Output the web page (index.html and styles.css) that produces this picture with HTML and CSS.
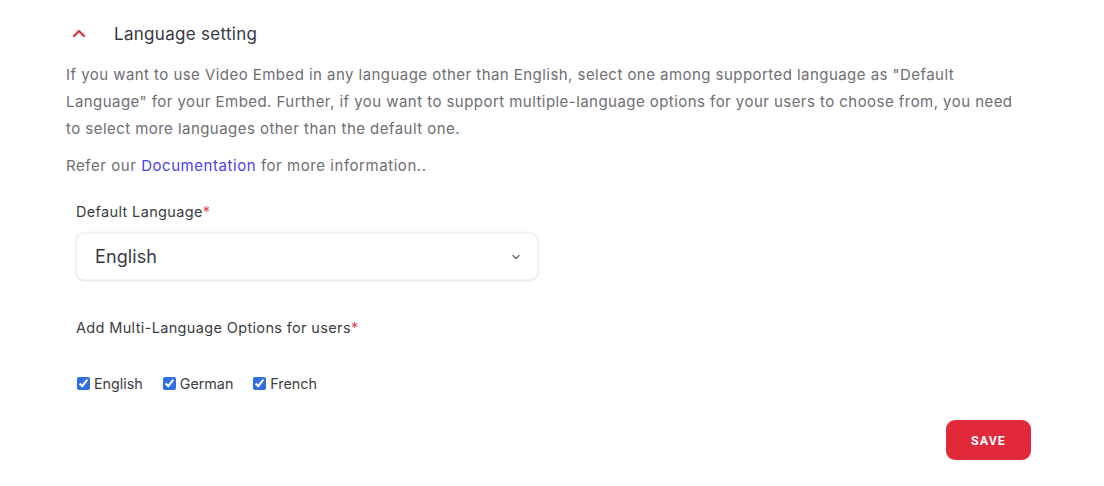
FILE: index.html
```html
<!DOCTYPE html>
<html lang="en">
<head>
<meta charset="utf-8">
<title>Language setting</title>
<link rel="stylesheet" href="styles.css">
</head>
<body>
<section class="panel">
  <header class="panel-head">
    <svg class="chev-up" width="14" height="10" viewBox="0 0 14 10"><path d="M2 8 L7 3 L12 8" fill="none" stroke="#e0323a" stroke-width="2.2" stroke-linecap="round" stroke-linejoin="round"/></svg>
    <h2 class="panel-title">Language setting</h2>
  </header>
  <p class="desc">If you want to use Video Embed in any language other than English, select one among supported language as "Default Language" for your Embed. Further, if you want to support multiple-language options for your users to choose from, you need to select more languages other than the default one.</p>
  <p class="refer">Refer our <a href="#" class="doc-link">Documentation</a> for more information..</p>
  <div class="field">
    <label class="label">Default Language<span class="req">*</span></label>
    <div class="select">
      <span class="select-value">English</span>
      <svg class="chev-down" width="10" height="6" viewBox="0 0 10 6"><path d="M2 1.5 L5 4.5 L8 1.5" fill="none" stroke="#666" stroke-width="1.3" stroke-linecap="round" stroke-linejoin="round"/></svg>
    </div>
  </div>
  <div class="field multi">
    <label class="label">Add Multi-Language Options for users<span class="req">*</span></label>
    <div class="checks">
      <label class="check"><input type="checkbox" checked><span>English</span></label>
      <label class="check"><input type="checkbox" checked><span>German</span></label>
      <label class="check"><input type="checkbox" checked><span>French</span></label>
    </div>
  </div>
  <div class="actions">
    <button class="save">SAVE</button>
  </div>
</section>
</body>
</html>
```
FILE: styles.css
```css
* { box-sizing: border-box; }
html, body { margin: 0; padding: 0; background: #fff; }
body {
  font-family: Inter, Roboto, "Liberation Sans", sans-serif;
  color: #3a3a46;
  width: 1104px;
  height: 486px;
  overflow: hidden;
}
.panel {
  padding: 20px 73px 0 66px;
}
.panel-head {
  display: flex;
  align-items: center;
  height: 28px;
  padding-left: 6px;
}
.chev-up { display: block; margin-right: 28px; margin-top: -2px; }
.panel-title {
  margin: 0;
  font-size: 17px;
  font-weight: 400;
  color: #383844;
  letter-spacing: 0.3px;
}
.desc {
  margin: 13px 0 0 0;
  width: 955px;
  font-size: 15px;
  line-height: 27px;
  color: #6e6e73;
  letter-spacing: 0.45px;
}
.refer {
  margin: 14px 0 0 0;
  font-size: 15px;
  line-height: 20px;
  color: #6e6e73;
  letter-spacing: 0.55px;
}
.doc-link { color: #4b3ef0; text-decoration: none; }
.field { padding-left: 10px; }
.label {
  display: block;
  font-size: 14.5px;
  line-height: 18px;
  color: #3c3c44;
  letter-spacing: 0.35px;
}
.req { color: #e24b52; }
.refer + .field { margin-top: 27px; }
.select {
  margin-top: 12px;
  width: 462px;
  height: 47px;
  border-radius: 8px;
  background: #fff;
  box-shadow: 0 0 3px rgba(0,0,0,0.12), 0 1px 2px rgba(0,0,0,0.05);
  border: 1px solid #f2f2f5;
  display: flex;
  align-items: center;
  justify-content: space-between;
  padding: 0 16px 0 18px;
}
.select-value { font-size: 18px; color: #3a3a46; letter-spacing: 0.1px; }
.chev-down { display: block; }
.multi { margin-top: 39px; }
.checks {
  display: flex;
  gap: 19px;
  margin-top: 38px;
}
.check {
  display: flex;
  align-items: center;
  font-size: 14.3px;
  color: #3c3c44;
}
.check input {
  margin: 0 4px 0 1px;
  width: 13px;
  height: 13px;
  accent-color: #2f6fe0;
}
.actions {
  display: flex;
  justify-content: flex-end;
  margin-top: 28px;
}
.save {
  width: 85px;
  height: 40px;
  border: none;
  border-radius: 9px;
  background: #e2293a;
  color: #fff;
  font-family: Roboto, "Liberation Sans", sans-serif;
  font-weight: 700;
  font-size: 12.5px;
  letter-spacing: 1px;
}
```
